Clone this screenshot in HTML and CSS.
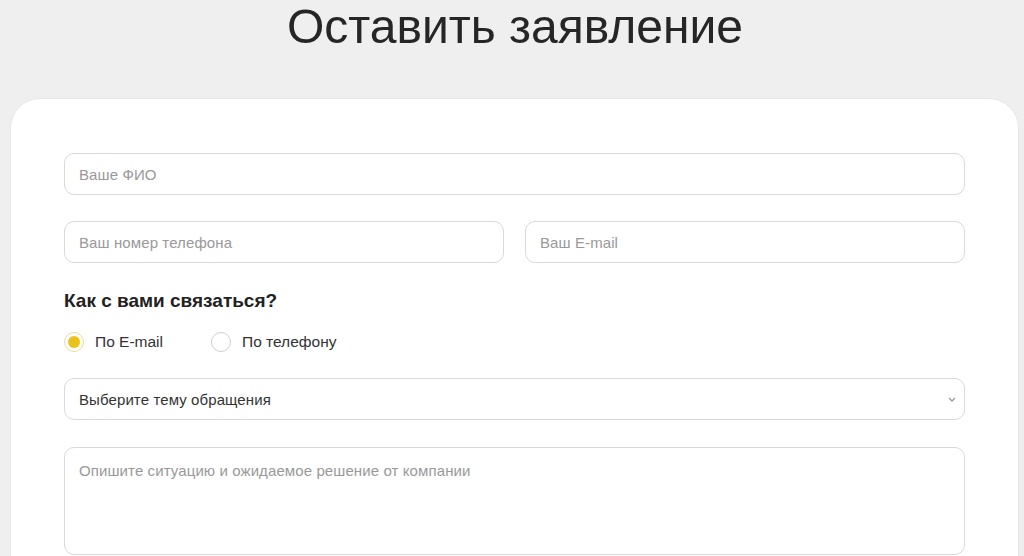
FILE: index.html
```html
<!DOCTYPE html>
<html>
<head>
    <title>Оставить заявление</title>
    <meta name="viewport" content="width=device-width, initial-scale=1.0">
    <link rel="stylesheet" href="styles.css">
</head>
<body>
    <h1 class="page-title">Оставить заявление</h1>

    <!-- Application form -->
    <div class="card">
        <form class="form">
            <input type="text" class="field" placeholder="Ваше ФИО">

            <div class="row">
                <input type="tel" class="field" placeholder="Ваш номер телефона">
                <input type="email" class="field" placeholder="Ваш E-mail">
            </div>

            <div class="contact">
                <h3>Как с вами связаться?</h3>
                <div class="radios">
                    <label class="radio">
                        <input type="radio" name="contact" checked>
                        <span class="mark"></span>
                        По E-mail
                    </label>
                    <label class="radio">
                        <input type="radio" name="contact">
                        <span class="mark"></span>
                        По телефону
                    </label>
                </div>
            </div>

            <div class="select-wrap">
                <select class="field select">
                    <option>Выберите тему обращения</option>
                </select>
                <svg class="chevron" width="8" height="5" viewBox="0 0 8 5">
                    <path d="M1 1l3 3 3-3" fill="none" stroke="#999" stroke-width="1.3"/>
                </svg>
            </div>

            <textarea class="field area" placeholder="Опишите ситуацию и ожидаемое решение от компании"></textarea>
        </form>
    </div>
</body>
</html>
```

FILE: styles.css
```css
* {
    box-sizing: border-box;
    margin: 0;
    padding: 0;
}

body {
    font-family: "Liberation Sans", Arial, sans-serif;
    background-color: #efefef;
    color: #222;
    overflow: hidden;
}

.page-title {
    font-weight: 400;
    font-size: 49px;
    line-height: 52px;
    padding-left: 6px;
    text-align: center;
    color: #262626;
    transform: scaleX(0.98);
}

/* Card */
.card {
    margin: 46px 5px 0 10px;
    background: white;
    border: 1px solid #e6e6e6;
    border-radius: 30px;
    padding: 54px 53px 60px 53px;
}

.form {
    display: flex;
    flex-direction: column;
}

.field {
    display: block;
    width: 100%;
    height: 42px;
    padding: 0 14px;
    border: 1px solid #d9d9d9;
    border-radius: 10px;
    background: white;
    font-family: inherit;
    font-size: 15px;
    letter-spacing: 0.1px;
    color: #333;
    outline: none;
}

.field::placeholder {
    color: #999;
}

.row {
    display: flex;
    gap: 21px;
    margin-top: 26px;
}

.contact {
    margin-top: 27px;
}

.contact h3 {
    font-size: 19px;
    font-weight: 700;
    color: #222;
    line-height: 22px;
}

.radios {
    display: flex;
    gap: 48px;
    margin-top: 20px;
}

.radio {
    display: flex;
    align-items: center;
    gap: 11px;
    font-size: 15.5px;
    color: #333;
    cursor: pointer;
}

.radio input {
    display: none;
}

.mark {
    width: 20px;
    height: 20px;
    border-radius: 50%;
    border: 1px solid #cfcfcf;
    display: flex;
    align-items: center;
    justify-content: center;
}

.radio input:checked + .mark {
    border-color: #efd99a;
}

.radio input:checked + .mark::after {
    content: "";
    width: 12px;
    height: 12px;
    border-radius: 50%;
    background: #eac31a;
}

.select-wrap {
    position: relative;
    margin-top: 26px;
}

.select {
    appearance: none;
    -webkit-appearance: none;
    color: #333;
}

.chevron {
    position: absolute;
    right: 9px;
    top: 19px;
}

.area {
    margin-top: 27px;
    height: 108px;
    padding-top: 14px;
    resize: none;
}
```
